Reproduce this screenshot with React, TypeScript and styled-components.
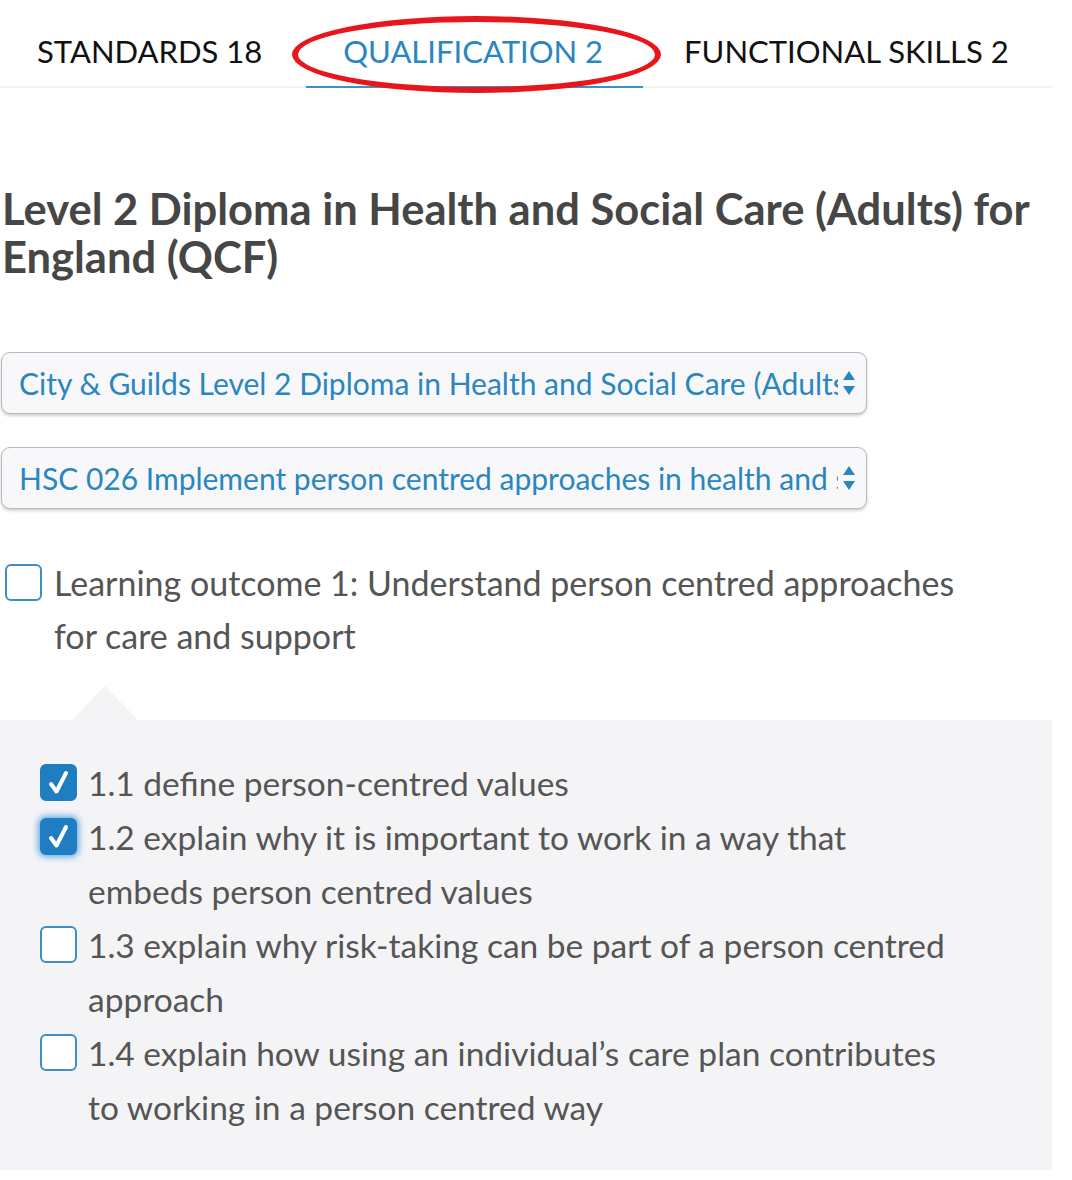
import styled, { createGlobalStyle } from "styled-components";

const GlobalStyle = createGlobalStyle`
  body {
    margin: 0;
    background: #ffffff;
    font-family: Lato, "Open Sans", sans-serif;
  }
`;

const tabs = [
  { label: "STANDARDS 18", active: false },
  { label: "QUALIFICATION 2", active: true },
  { label: "FUNCTIONAL SKILLS 2", active: false },
];

const criteria = [
  { text: "1.1 define person-centred values", checked: true, focused: false },
  {
    text: "1.2 explain why it is important to work in a way that embeds person centred values",
    checked: true,
    focused: true,
  },
  {
    text: "1.3 explain why risk-taking can be part of a person centred approach",
    checked: false,
    focused: false,
  },
  {
    text: "1.4 explain how using an individual\u2019s care plan contributes to working in a person centred way",
    checked: false,
    focused: false,
  },
];

const SelectArrows = () => (
  <svg width="14" height="28" viewBox="0 0 14 28">
    <path d="M7 2 L13 11 L1 11 Z" fill="#2a86c0" />
    <path d="M7 26 L13 17 L1 17 Z" fill="#2a86c0" />
  </svg>
);

const CheckMark = () => (
  <svg width="28" height="28" viewBox="0 0 28 28">
    <path
      d="M6 15 L11.5 22.5 L21 4"
      fill="none"
      stroke="#ffffff"
      strokeWidth="4"
      strokeLinecap="round"
      strokeLinejoin="round"
    />
  </svg>
);

export default function App() {
  return (
    <>
      <GlobalStyle />
      <Page>
        <TabBar>
          {tabs.map((t) => (
            <Tab key={t.label} active={t.active}>
              {t.label}
            </Tab>
          ))}
          <Annotation />
        </TabBar>

        <Heading>
          Level 2 Diploma in Health and Social Care (Adults) for England (QCF)
        </Heading>

        <SelectBox>
          <SelectText>
            City &amp; Guilds Level 2 Diploma in Health and Social Care (Adults) for England
          </SelectText>
          <SelectArrows />
        </SelectBox>
        <SelectBox>
          <SelectText>
            HSC 026 Implement person centred approaches in health and social care
          </SelectText>
          <SelectArrows />
        </SelectBox>

        <OutcomeRow>
          <CheckBox checked={false} />
          <OutcomeText>
            Learning outcome 1: Understand person centred approaches for care and support
          </OutcomeText>
        </OutcomeRow>

        <CriteriaPanel>
          {criteria.map((c) => (
            <CriteriaRow key={c.text}>
              <CheckBox checked={c.checked} focused={c.focused}>
                {c.checked && <CheckMark />}
              </CheckBox>
              <CriteriaText>{c.text}</CriteriaText>
            </CriteriaRow>
          ))}
        </CriteriaPanel>
      </Page>
    </>
  );
}

const Page = styled.div`
  width: 1052px;
  padding-bottom: 10px;
`;

const TabBar = styled.nav`
  position: relative;
  display: flex;
  align-items: stretch;
  height: 88px;
  gap: 4px;
  border-bottom: 2px solid #f1f1f1;
  box-sizing: border-box;
`;

const Tab = styled.div<{ active: boolean }>`
  display: flex;
  align-items: center;
  padding: 16px 40px 0 37px;
  font-size: 31px;
  color: ${(p) => (p.active ? "#2a86c0" : "#111111")};
  border-bottom: 2px solid ${(p) => (p.active ? "#3d8fc6" : "transparent")};
  margin-bottom: -2px;
`;

const Annotation = styled.div`
  position: absolute;
  left: 292px;
  top: 16px;
  width: 369px;
  height: 77px;
  border: 6px solid #e8161c;
  border-radius: 50%;
  box-sizing: border-box;
  pointer-events: none;
`;

const Heading = styled.h1`
  margin: 96px 0 72px 2px;
  font-size: 43.5px;
  line-height: 48px;
  font-weight: 700;
  color: #464646;
`;

const SelectBox = styled.div`
  display: flex;
  align-items: center;
  width: 866px;
  height: 62px;
  margin: 0 0 33px 1px;
  padding: 0 10px 0 17px;
  box-sizing: border-box;
  border: 1px solid #b9b9bd;
  border-radius: 9px;
  background: #f8f8fa;
  box-shadow: 0 2px 3px rgba(0, 0, 0, 0.18);
`;

const SelectText = styled.div`
  flex: 1;
  min-width: 0;
  overflow: hidden;
  white-space: nowrap;
  font-size: 30px;
  color: #2a86c0;
  margin-right: 4px;
`;

const OutcomeRow = styled.div`
  display: flex;
  align-items: flex-start;
  gap: 12px;
  margin: 47px 0 0 5px;
  padding-right: 80px;
`;

const CheckBox = styled.div<{ checked: boolean; focused?: boolean }>`
  flex: none;
  width: 37px;
  height: 37px;
  margin-top: 8px;
  box-sizing: border-box;
  border-radius: 6px;
  border: 2px solid ${(p) => (p.checked ? "#1f7ec2" : "#3d8fc6")};
  background: ${(p) => (p.checked ? "#1f7ec2" : "#ffffff")};
  box-shadow: ${(p) => (p.focused ? "0 0 6px 2px rgba(40, 140, 220, 0.7)" : "none")};
  display: flex;
  align-items: center;
  justify-content: center;
`;

const OutcomeText = styled.div`
  font-size: 34px;
  line-height: 53px;
  color: #555555;
`;

const CriteriaPanel = styled.div`
  position: relative;
  margin-top: 58px;
  padding: 36px 95px 36px 40px;
  background: #f4f4f6;

  &::before {
    content: "";
    position: absolute;
    left: 72px;
    top: -34px;
    border-left: 33px solid transparent;
    border-right: 33px solid transparent;
    border-bottom: 34px solid #f4f4f6;
  }
`;

const CriteriaRow = styled.div`
  display: flex;
  align-items: flex-start;
  gap: 11px;
`;

const CriteriaText = styled.div`
  font-size: 33.5px;
  line-height: 54px;
  color: #555555;
`;
